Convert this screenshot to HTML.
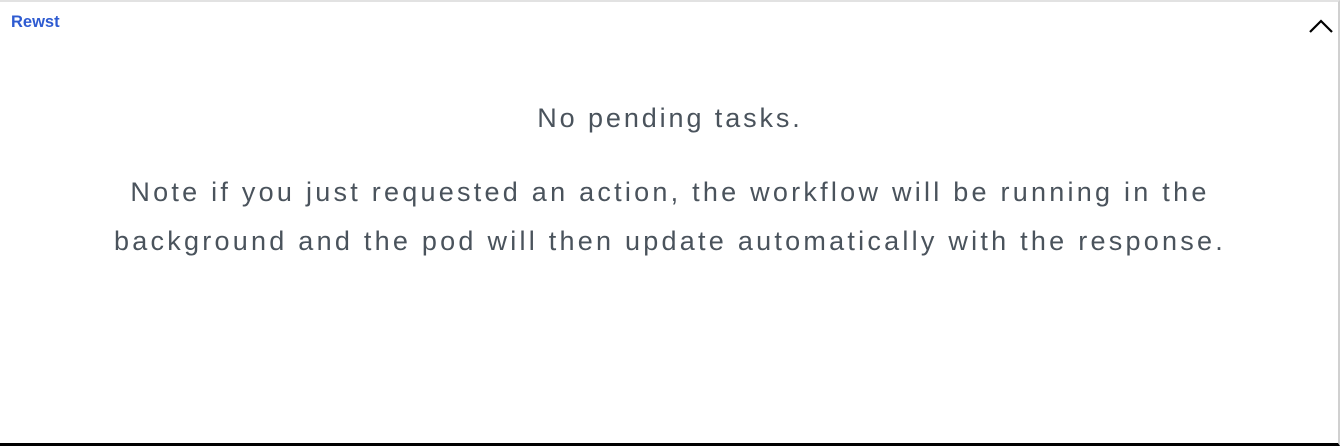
<!DOCTYPE html>
<html><head><style>
html,body{margin:0;padding:0;background:#fff;}
.box{position:absolute;left:0;top:0;width:1338px;height:441px;border-top:2px solid #e2e2e2;border-right:2px solid #d0d0d0;border-bottom:3px solid #000;background:#fff;}
.brand{position:absolute;left:11px;top:13px;font:bold 16.5px "Liberation Sans",sans-serif;color:#2e5bd1;}
.t1{position:absolute;left:0;width:1340px;top:103px;text-align:center;font:27px "Liberation Sans",sans-serif;color:#4a535c;letter-spacing:2.9px;}
.t2{position:absolute;left:0;width:1340px;top:168px;text-align:center;font:27px/49px "Liberation Sans",sans-serif;color:#4a535c;letter-spacing:3.25px;}
svg{position:absolute;left:1307px;top:17px;}
</style></head><body>
<div class="box"></div>
<div class="brand">Rewst</div>
<svg width="28" height="18" viewBox="0 0 28 18"><path d="M3 15 L14 4 L25 15" fill="none" stroke="#000" stroke-width="2.2"/></svg>
<div class="t1">No pending tasks.</div>
<div class="t2">Note if you just requested an action, the workflow will be running in the<br>background and the pod will then update automatically with the response.</div>
</body></html>
